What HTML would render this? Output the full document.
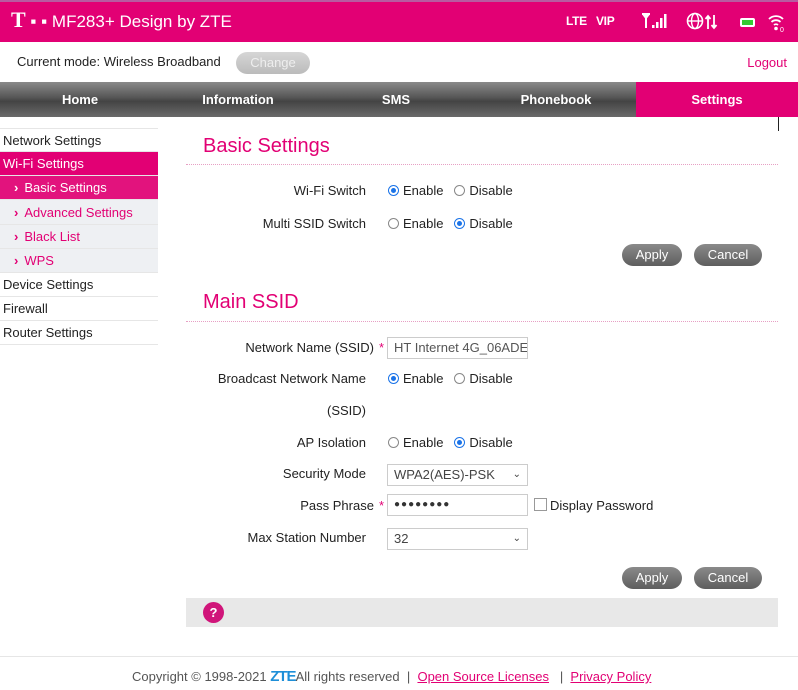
<!DOCTYPE html>
<html><head><meta charset="utf-8"><style>
*{margin:0;padding:0;box-sizing:border-box}
body{width:798px;height:690px;background:#fff;font-family:"Liberation Sans",Arial,sans-serif;font-size:13px;color:#222;position:relative;overflow:hidden}
.a{position:absolute}
#hdr{left:0;top:0;width:798px;height:42px;background:#e20074;border-top:2px solid #b85aa0}
#nav{left:0;top:82px;width:798px;height:35px;background:linear-gradient(#8a8a8a,#555 45%,#444 55%,#6a6a6a)}
#nav div{position:absolute;top:0;height:35px;line-height:36px;color:#fff;font-weight:bold;font-size:13px;text-align:center}
.side{left:0;width:158px;height:24px;line-height:24px;padding-left:3px;border-bottom:1px solid #e6e6e6;background:#fff;font-size:13px}
.sub{background:#eef0f3;color:#e20074;padding-left:14px}
.sub:before{content:"›";font-weight:bold;margin-right:6px}
.h{left:203px;font-size:20px;color:#e20074}
.dl{left:186px;width:592px;border-top:1px dotted #e7a0c4}
.lb{right:432px;text-align:right;font-size:13px;white-space:nowrap}
.rd{width:11px;height:11px;border:1px solid #888;border-radius:50%;display:inline-block;vertical-align:-1px;margin-right:4px;background:#fff;position:relative}
.rd.on{border-color:#1a73e8}
.rd.on:after{content:"";position:absolute;left:2px;top:2px;width:5px;height:5px;border-radius:50%;background:#1a73e8}
.in{left:387px;width:141px;height:22px;border:1px solid #ccc;line-height:20px;padding-left:6px;color:#555;font-size:13px;background:#fff;white-space:nowrap;overflow:hidden}
.btn{height:22px;border-radius:11px;background:linear-gradient(#8a8a8a,#5e5e5e);color:#fff;text-align:center;line-height:22px;font-size:13px}
.star{color:#e20074;margin-left:5px}
</style></head><body>
<div id="hdr" class="a">
 <div class="a" style="left:11px;top:8px;color:#fff;font-size:17px;white-space:nowrap"><b style="font-family:'Liberation Serif',serif;font-size:22px;line-height:20px">T</b> ▪ ▪ MF283+ Design by ZTE</div>
 <div class="a" style="left:566px;top:12px;color:#fff;font-weight:bold;font-size:12px;letter-spacing:-0.3px">LTE&nbsp;&nbsp; VIP</div>
 <svg class="a" style="left:641px;top:10px" width="30" height="18"><path d="M1 2h8M5 2v14M2 2l3 4 3-4" stroke="#fff" stroke-width="2" fill="none"/><rect x="11" y="13" width="2.5" height="3" fill="#fff"/><rect x="15" y="10" width="2.5" height="6" fill="#fff"/><rect x="19" y="6" width="2.5" height="10" fill="#fff"/><rect x="23" y="2" width="2.5" height="14" fill="#fff"/></svg>
 <svg class="a" style="left:686px;top:10px" width="34" height="20"><circle cx="9" cy="9" r="7.5" fill="none" stroke="#fff" stroke-width="1.6"/><ellipse cx="9" cy="9" rx="3.5" ry="7.5" fill="none" stroke="#fff" stroke-width="1.4"/><line x1="1.5" y1="9" x2="16.5" y2="9" stroke="#fff" stroke-width="1.4"/><path d="M22 17V4M19.5 7l2.5-3 2.5 3M28 3v13M25.5 13l2.5 3 2.5-3" stroke="#fff" stroke-width="1.8" fill="none"/></svg>
 <div class="a" style="left:740px;top:16px;width:15px;height:9px;background:#fff;border-radius:2px"><div style="margin:2px;width:11px;height:5px;background:#3c3"></div></div>
 <svg class="a" style="left:767px;top:11px" width="20" height="20"><path d="M2 6a10 10 0 0 1 14 0M4.5 9a6.5 6.5 0 0 1 9 0M7 12a3 3 0 0 1 4 0" stroke="#fff" stroke-width="1.8" fill="none"/><circle cx="9" cy="15.5" r="1.8" fill="#fff"/><text x="13" y="19" font-size="7" fill="#fff">0</text></svg>
</div>
<div class="a" style="left:17px;top:54px;font-size:13px">Current mode: Wireless Broadband</div>
<div class="a btn" style="left:236px;top:52px;width:74px;background:linear-gradient(#d6d6d6,#bbb);color:#eee">Change</div>
<div class="a" style="right:11px;top:55px;color:#e20074">Logout</div>
<div id="nav" class="a">
 <div style="left:0;width:160px">Home</div>
 <div style="left:160px;width:156px">Information</div>
 <div style="left:316px;width:160px">SMS</div>
 <div style="left:476px;width:160px">Phonebook</div>
 <div style="left:636px;width:162px;background:#e20074">Settings</div>
</div>
<div class="a" style="left:778px;top:117px;width:1px;height:14px;background:#222"></div>

<div class="a side" style="top:128px;border-top:1px solid #e6e6e6">Network Settings</div>
<div class="a side" style="top:152px;background:#e20074;color:#fff">Wi-Fi Settings</div>
<div class="a side sub" style="top:176px;background:#e2137d;color:#fff">Basic Settings</div>
<div class="a side sub" style="top:200px;height:25px;line-height:25px">Advanced Settings</div>
<div class="a side sub" style="top:225px">Black List</div>
<div class="a side sub" style="top:249px">WPS</div>
<div class="a side" style="top:273px">Device Settings</div>
<div class="a side" style="top:297px">Firewall</div>
<div class="a side" style="top:321px">Router Settings</div>

<div class="a h" style="top:135px">Basic Settings</div>
<div class="a dl" style="top:164px"></div>
<div class="a lb" style="top:183px">Wi-Fi Switch</div>
<div class="a" style="left:388px;top:183px"><span class="rd on"></span>Enable&nbsp;&nbsp; <span class="rd"></span>Disable</div>
<div class="a lb" style="top:216px">Multi SSID Switch</div>
<div class="a" style="left:388px;top:216px"><span class="rd"></span>Enable&nbsp;&nbsp; <span class="rd on"></span>Disable</div>
<div class="a btn" style="left:622px;top:244px;width:60px">Apply</div>
<div class="a btn" style="left:694px;top:244px;width:68px">Cancel</div>

<div class="a h" style="top:291px">Main SSID</div>
<div class="a dl" style="top:321px"></div>
<div class="a lb" style="right:414px;top:340px">Network Name (SSID)<span class="star">*</span></div>
<div class="a in" style="top:337px">HT Internet 4G_06ADE</div>
<div class="a lb" style="top:371px">Broadcast Network Name</div>
<div class="a" style="left:388px;top:371px"><span class="rd on"></span>Enable&nbsp;&nbsp; <span class="rd"></span>Disable</div>
<div class="a lb" style="top:403px">(SSID)</div>
<div class="a lb" style="top:435px">AP Isolation</div>
<div class="a" style="left:388px;top:435px"><span class="rd"></span>Enable&nbsp;&nbsp; <span class="rd on"></span>Disable</div>
<div class="a lb" style="top:466px">Security Mode</div>
<div class="a in" style="top:464px;color:#444">WPA2(AES)-PSK<span style="position:absolute;right:6px;font-size:10px">⌄</span></div>
<div class="a lb" style="right:414px;top:498px">Pass Phrase<span class="star">*</span></div>
<div class="a in" style="top:494px;color:#333;font-size:10px;letter-spacing:1px">●●●●●●●●</div>
<div class="a" style="left:534px;top:498px;width:13px;height:13px;border:1px solid #999"></div>
<div class="a" style="left:550px;top:498px">Display Password</div>
<div class="a lb" style="top:530px">Max Station Number</div>
<div class="a in" style="top:528px;color:#444">32<span style="position:absolute;right:6px;font-size:10px">⌄</span></div>
<div class="a btn" style="left:622px;top:567px;width:60px">Apply</div>
<div class="a btn" style="left:694px;top:567px;width:68px">Cancel</div>

<div class="a" style="left:186px;top:598px;width:592px;height:29px;background:#e8e8e8"></div>
<div class="a" style="left:203px;top:602px;width:21px;height:21px;border-radius:50%;background:#d0157a;color:#fff;font-weight:bold;text-align:center;line-height:21px;font-size:13px">?</div>

<div class="a" style="left:0;top:656px;width:798px;border-top:1px solid #e6e6e6"></div>
<div class="a" style="left:132px;top:668px;color:#555;font-size:13px;white-space:nowrap">Copyright © 1998-2021 <b style="color:#1e8fd8;font-size:15px;letter-spacing:-1px">ZTE</b>All rights reserved &nbsp;| &nbsp;<u style="color:#e20074">Open Source Licenses</u> &nbsp;&nbsp;| &nbsp;<u style="color:#e20074">Privacy Policy</u></div>
</body></html>
